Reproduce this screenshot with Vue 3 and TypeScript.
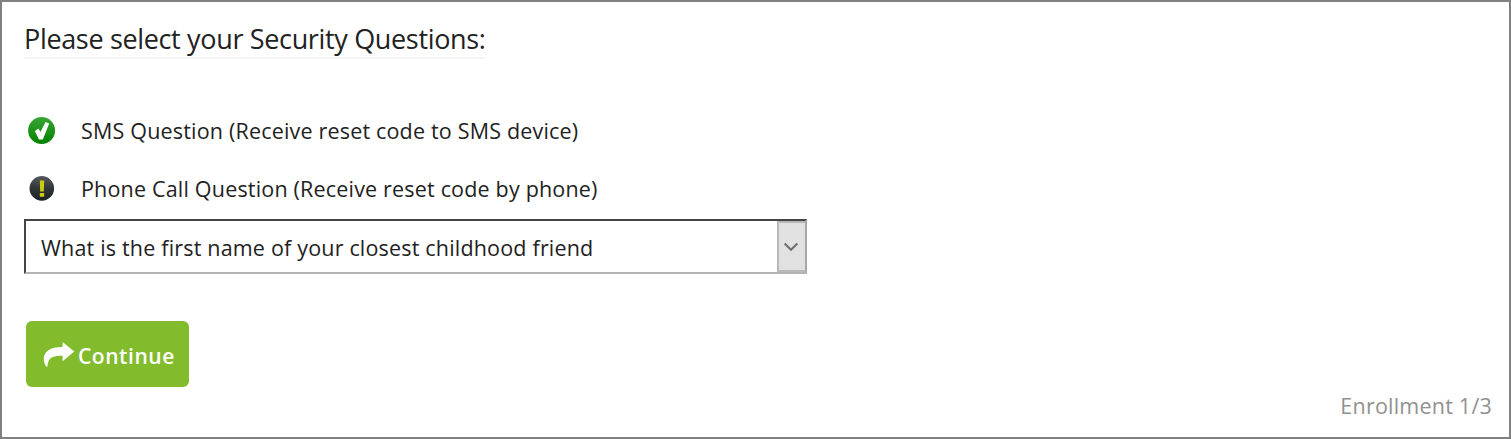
<script setup lang="ts">
import { ref } from 'vue'

interface Factor {
  kind: 'ok' | 'warn'
  label: string
}

const factors: Factor[] = [
  { kind: 'ok', label: 'SMS Question (Receive reset code to SMS device)' },
  { kind: 'warn', label: 'Phone Call Question (Receive reset code by phone)' },
]
const question = ref('What is the first name of your closest childhood friend')
</script>

<template>
  <main class="panel">
    <h1 class="title"><span>Please select your Security Questions:</span></h1>
    <ul class="factors">
      <li v-for="f in factors" :key="f.kind" class="factor">
        <svg v-if="f.kind === 'ok'" class="icon" viewBox="0 0 30 30">
          <defs>
            <linearGradient id="okFill" x1="0" y1="0" x2="0" y2="1">
              <stop offset="0" stop-color="#38a535" />
              <stop offset="0.45" stop-color="#21951b" />
              <stop offset="1" stop-color="#058000" />
            </linearGradient>
          </defs>
          <circle cx="14.6" cy="14.5" r="13.5" fill="url(#okFill)" />
          <path d="M7.8 15 L11.6 12.4 L13.4 16 L18.6 6 L22.2 7.4 L15.8 23.4 L12 23.4 Z" fill="#fff" />
        </svg>
        <svg v-else class="icon" viewBox="0 0 30 30">
          <defs>
            <linearGradient id="warnFill" x1="0" y1="0" x2="0" y2="1">
              <stop offset="0" stop-color="#555b5d" />
              <stop offset="0.5" stop-color="#303638" />
              <stop offset="1" stop-color="#1b2022" />
            </linearGradient>
          </defs>
          <circle cx="14.8" cy="14.4" r="12.3" fill="url(#warnFill)" />
          <path d="M12.8 6.6 H17.2 L16.8 17.4 H13.2 Z M12.8 19 H17.2 V22.8 H12.8 Z" fill="#d0c80e" />
        </svg>
        <span class="label">{{ f.label }}</span>
      </li>
    </ul>
    <div class="select" role="combobox">
      <span class="value">{{ question }}</span>
      <span class="arrow">
        <svg width="16" height="10" viewBox="0 0 16 10">
          <path d="M1.6 1.6 L8 7.8 L14.4 1.6" fill="none" stroke="#707070" stroke-width="2.1" />
        </svg>
      </span>
    </div>
    <button class="continue" type="button">
      <svg class="share" width="32" height="26" viewBox="0 0 32 26">
        <path d="M19.6 0 L31.3 9.6 L19.6 19.2 V13.8 C10 12.9 4.6 16 4.6 24.6 H3 C-2.6 13.6 2.6 5 19.6 5 Z" fill="#fff" />
      </svg>
      <span class="go">Continue</span>
    </button>
    <footer class="step"><span>Enrollment 1/3</span></footer>
  </main>
</template>

<style>
body {
  margin: 0;
  background: #fff;
}
</style>

<style scoped>
.panel {
  box-sizing: border-box;
  width: 1511px;
  height: 439px;
  border: 2px solid #808080;
  background: #fff;
  color: #222;
  font-family: 'Open Sans', 'Noto Sans', sans-serif;
  overflow: hidden;
  white-space: nowrap;
  padding: 16px 17px 0 22px;
  display: flex;
  flex-direction: column;
  align-items: flex-start;
}
.title {
  margin: 0;
  box-sizing: border-box;
  width: 462px;
  height: 41px;
  border-bottom: 2px solid #f5f5f5;
  font-size: 27px;
  font-weight: 400;
  line-height: 42px;
  letter-spacing: -0.34px;
}
.factors {
  list-style: none;
  margin: 43px 0 0;
  padding: 0;
}
.factor {
  display: flex;
  align-items: center;
  height: 58px;
}
.icon {
  width: 30px;
  height: 30px;
  margin-left: 3px;
  margin-right: 24px;
}
.label {
  font-size: 21.5px;
  line-height: 30px;
  letter-spacing: 0.185px;
}
.select {
  box-sizing: border-box;
  width: 783px;
  height: 55px;
  margin-top: 1px;
  border: 2px solid #444;
  border-right: 2px solid #a8a8a8;
  border-bottom: 2px solid #b4b4b4;
  display: flex;
  align-items: stretch;
  justify-content: space-between;
}
.value {
  padding-left: 15px;
  font-size: 21.5px;
  line-height: 53px;
  letter-spacing: 0.185px;
}
.arrow {
  box-sizing: border-box;
  width: 28px;
  border: 2px solid #b8b8b8;
  border-right: 0;
  background: #e1e1e1;
  display: flex;
  align-items: center;
  justify-content: center;
  padding-right: 2px;
}
.continue {
  width: 163px;
  height: 66px;
  margin: 47px 0 0 2px;
  padding: 0 0 0 17px;
  border: 0;
  border-radius: 6px;
  background: #82bc2d;
  color: #fff;
  font: 600 21px/30px 'Open Sans', 'Noto Sans', sans-serif;
  letter-spacing: 0.55px;
  display: flex;
  align-items: center;
}
.share {
  margin-right: 3px;
  margin-top: 2px;
}
.go {
  padding-top: 4px;
}
.step {
  align-self: flex-end;
  color: #919191;
  font-size: 21.5px;
  line-height: 30px;
  margin-top: 4px;
  letter-spacing: 0.22px;
}
</style>
